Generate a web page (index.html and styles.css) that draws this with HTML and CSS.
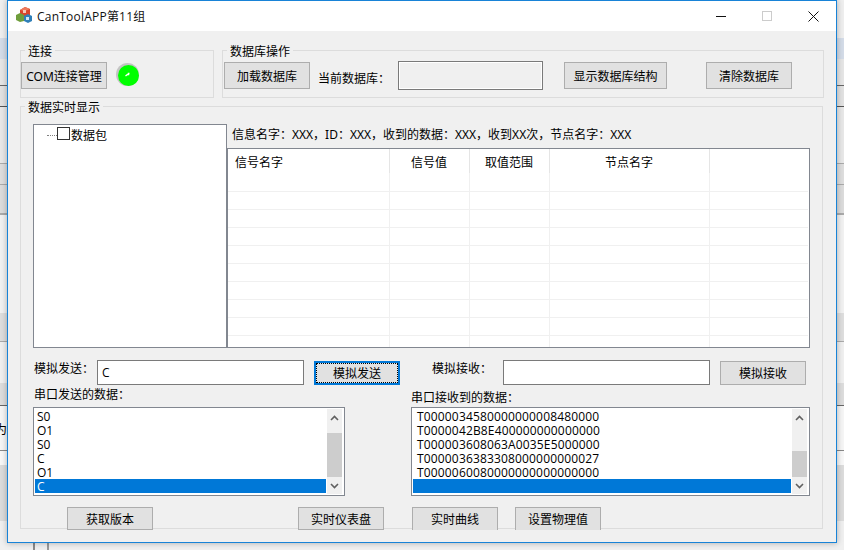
FILE: index.html
```html
<!DOCTYPE html>
<html lang="zh">
<head>
<meta charset="utf-8">
<title>CanToolAPP第11组</title>
<link rel="stylesheet" href="styles.css">
</head>
<body>
<div class="desktop">
  <span class="behind-glyph">为</span>
  <div class="window">
    <header class="titlebar">
      <svg class="app-icon" width="16" height="17" viewBox="0 0 16 17">
        <polygon points="4,4 9,1 14,3 14,9 9,11 4,9" fill="#d9452b"/>
        <polygon points="9,1 14,3 9,5 4,4" fill="#ee7a5c"/>
        <polygon points="0,9 4,7 8,9 8,15 4,16 0,14" fill="#6f9e3c"/>
        <polygon points="8,10 12,8 16,10 16,15 12,17 8,15" fill="#2f7fb8"/>
        <rect x="10" y="11" width="3" height="3" fill="#cfe6f5"/>
        <rect x="7" y="4" width="3" height="3" fill="#f5c9b8"/>
      </svg>
      <span class="title">CanToolAPP第11组</span>
      <div class="caption-buttons">
        <div class="caption"><svg width="10" height="10" viewBox="0 0 10 10"><path d="M0 5.5H10" stroke="#111" fill="none"/></svg></div>
        <div class="caption"><svg width="10" height="10" viewBox="0 0 10 10"><rect x="0.5" y="0.5" width="9" height="9" stroke="#ccc" fill="none"/></svg></div>
        <div class="caption"><svg width="11" height="11" viewBox="0 0 11 11"><path d="M0.5 0.5L10.5 10.5M10.5 0.5L0.5 10.5" stroke="#111" fill="none"/></svg></div>
      </div>
    </header>

    <main class="form">
      <div class="top-row">
        <section class="group group-conn">
          <span class="legend">连接</span>
          <div class="group-line">
            <button class="btn">COM连接管理</button>
            <svg class="led" width="24" height="24" viewBox="0 0 24 24">
              <circle cx="11.5" cy="11.5" r="11.5" fill="#c4c4c4"/>
              <circle cx="12.5" cy="12.5" r="10.5" fill="#00ff00"/>
              <path d="M9.5 13L11.5 11.5H12.5V10.5H13.5" stroke="#fff" stroke-width="1.4" fill="none"/>
            </svg>
          </div>
        </section>
        <section class="group group-db">
          <span class="legend">数据库操作</span>
          <div class="group-line">
            <button class="btn">加载数据库</button>
            <span class="label db-label">当前数据库：</span>
            <div class="field db-field"></div>
            <button class="btn btn-struct">显示数据库结构</button>
            <button class="btn btn-clear">清除数据库</button>
          </div>
        </section>
      </div>

      <section class="group group-live">
        <span class="legend">数据实时显示</span>
        <div class="live-top">
          <div class="tree">
            <span class="tree-dots"></span>
            <span class="tree-check"></span>
            <span class="tree-text">数据包</span>
          </div>
          <div class="live-right">
            <div class="info">信息名字：XXX，ID：XXX，收到的数据：XXX，收到XX次，节点名字：XXX</div>
            <div class="grid-box">
              <table class="grid">
                <thead>
                  <tr><th class="col-name">信号名字</th><th class="col-val">信号值</th><th class="col-range">取值范围</th><th class="col-node">节点名字</th><th></th></tr>
                </thead>
                <tbody>
                  <tr><td></td><td></td><td></td><td></td><td></td></tr>
                  <tr><td></td><td></td><td></td><td></td><td></td></tr>
                  <tr><td></td><td></td><td></td><td></td><td></td></tr>
                  <tr><td></td><td></td><td></td><td></td><td></td></tr>
                  <tr><td></td><td></td><td></td><td></td><td></td></tr>
                  <tr><td></td><td></td><td></td><td></td><td></td></tr>
                  <tr><td></td><td></td><td></td><td></td><td></td></tr>
                  <tr><td></td><td></td><td></td><td></td><td></td></tr>
                  <tr><td></td><td></td><td></td><td></td><td></td></tr>
                  <tr class="last"><td></td><td></td><td></td><td></td><td></td></tr>
                </tbody>
              </table>
            </div>
          </div>
        </div>

        <div class="sim-row">
          <span class="label sim-send-label">模拟发送：</span>
          <div class="field sim-field"><span class="field-text">C</span></div>
          <button class="btn btn-sim btn-focus"><span class="focus-ring">模拟发送</span></button>
          <span class="label sim-recv-label">模拟接收：</span>
          <div class="field sim-field"></div>
          <button class="btn btn-sim btn-recv">模拟接收</button>
        </div>

        <div class="caption-row">
          <span class="label cap-send">串口发送的数据：</span>
          <span class="label cap-recv">串口接收到的数据：</span>
        </div>

        <div class="lists">
          <div class="list list-send">
            <ul class="items">
              <li>S0</li><li>O1</li><li>S0</li><li>C</li><li>O1</li><li class="selected">C</li>
            </ul>
            <div class="scrollbar">
              <svg class="chev-up" width="9" height="6" viewBox="0 0 9 6"><path d="M1 5L4.5 1.5L8 5" stroke="#606060" stroke-width="1.6" fill="none"/></svg>
              <div class="thumb thumb-send"></div>
              <svg class="chev-down" width="9" height="6" viewBox="0 0 9 6"><path d="M1 1L4.5 4.5L8 1" stroke="#606060" stroke-width="1.6" fill="none"/></svg>
            </div>
          </div>
          <div class="list list-recv">
            <ul class="items items-recv">
              <li>T0000034580000000008480000</li>
              <li>T0000042B8E400000000000000</li>
              <li>T000003608063A0035E5000000</li>
              <li>T0000036383308000000000027</li>
              <li>T0000060080000000000000000</li>
              <li class="selected">&nbsp;</li>
            </ul>
            <div class="scrollbar">
              <svg class="chev-up" width="9" height="6" viewBox="0 0 9 6"><path d="M1 5L4.5 1.5L8 5" stroke="#606060" stroke-width="1.6" fill="none"/></svg>
              <div class="thumb thumb-recv"></div>
              <svg class="chev-down" width="9" height="6" viewBox="0 0 9 6"><path d="M1 1L4.5 4.5L8 1" stroke="#606060" stroke-width="1.6" fill="none"/></svg>
            </div>
          </div>
        </div>

        <div class="bottom-row">
          <button class="btn btn-low btn-version">获取版本</button>
          <button class="btn btn-low btn-dash">实时仪表盘</button>
          <button class="btn btn-low btn-cut btn-curve">实时曲线</button>
          <button class="btn btn-low btn-cut btn-phys">设置物理值</button>
        </div>
      </section>
    </main>
  </div>
</div>
</body>
</html>
```

FILE: styles.css
```css
* { box-sizing: border-box; }
html, body { margin: 0; padding: 0; }
body {
  width: 844px;
  height: 550px;
  overflow: hidden;
  font-family: "Noto Sans", "Noto Sans CJK SC", sans-serif;
  font-size: 12px;
  color: #000;
}
.desktop {
  position: relative;
  width: 844px;
  height: 550px;
  overflow: hidden;
  background:
    linear-gradient(to right, transparent 33px, #8a8a8a 33px, #8a8a8a 35px, transparent 35px, transparent 47px, #9a9a9a 47px, #9a9a9a 49px, transparent 49px) 0 543px / 100% 7px no-repeat,
    linear-gradient(to bottom,
      #efefef 0, #efefef 38px,
      #d4dce8 38px, #d4dce8 59px,
      #e6e6e6 59px, #e6e6e6 85px,
      #666 85px, #666 86px,
      #e2e2e2 86px, #e2e2e2 106px,
      #555 106px, #555 107px,
      #e8e8e8 107px, #e8e8e8 163px,
      #aaa 163px, #aaa 164px,
      #dedede 164px, #dedede 184px,
      #aaa 184px, #aaa 185px,
      #dcdcdc 185px, #dcdcdc 213px,
      #aaa 213px, #aaa 215px,
      #f2f2f2 215px, #f2f2f2 313px,
      #dedede 313px, #dedede 341px,
      #aaa 341px, #aaa 342px,
      #f0f0f0 342px, #f0f0f0 383px,
      #ddd 383px, #ddd 405px,
      #666 405px, #666 406px,
      #f6f6f6 406px, #f6f6f6 450px,
      #888 450px, #888 451px,
      #f8f8f8 451px, #f8f8f8 465px,
      #dcdcdc 465px, #dcdcdc 521px,
      #f0f0f0 521px, #f0f0f0 550px);
}
.behind-glyph {
  position: absolute;
  left: -5px;
  top: 421px;
  font-size: 12px;
  line-height: 18px;
}
.window {
  position: absolute;
  left: 7px;
  top: 0;
  width: 830px;
  height: 543px;
  border: 1px solid #1883d7;
  background: #f0f0f0;
  box-shadow: 0 0 6px rgba(0, 0, 0, 0.3);
  display: flex;
  flex-direction: column;
}
.titlebar {
  height: 30px;
  flex: none;
  background: #fff;
  display: flex;
  align-items: center;
  padding-left: 8px;
}
.app-icon { flex: none; margin-top: -3px; }
.title {
  margin-left: 5px;
  font-family: "Open Sans", "Noto Sans CJK SC", sans-serif;
  font-size: 12px;
  letter-spacing: 0.22px;
  color: #111;
  white-space: nowrap;
}
.caption-buttons { display: flex; margin-left: auto; height: 30px; }
.caption {
  width: 46px;
  display: flex;
  align-items: center;
  justify-content: center;
}
.form {
  flex: 1;
  padding: 19px 0 0 12px;
  display: flex;
  flex-direction: column;
  gap: 8px;
}
.top-row { display: flex; gap: 8px; }
.group {
  position: relative;
  border: 1px solid #dcdcdc;
}
.legend {
  position: absolute;
  left: 4px;
  top: -7px;
  padding: 0 3px;
  background: #f0f0f0;
  line-height: 16px;
  white-space: nowrap;
}
.group-conn { width: 194px; height: 48px; }
.group-db { width: 602px; height: 48px; }
.group-live { width: 803px; height: 423px; padding: 17px 0 0 12px; }
.group-line { display: flex; align-items: flex-start; padding-top: 10px; }
.group-conn .group-line { padding-top: 11px; }
.group-db .group-line { padding: 10px 0 0 1px; }
.btn {
  width: 86px;
  height: 27px;
  margin: 1px 0 0;
  padding: 0;
  flex: none;
  font: inherit;
  color: #000;
  background: #e1e1e1;
  border: 1px solid #adadad;
  border-radius: 0;
  white-space: nowrap;
}
.group-conn .btn { margin-top: 0; }
.led { flex: none; margin: 1px 0 0 9px; }
.label { white-space: nowrap; line-height: 16px; }
.db-label { width: 80px; margin: 10px 0 0 8px; flex: none; }
.field {
  background: #fff;
  border: 1px solid #7a7a7a;
  flex: none;
}
.db-field {
  width: 145px;
  height: 29px;
  background: #f0f0f0;
  box-shadow: inset 0 0 0 1px #fff;
}
.btn-struct { width: 103px; margin-left: 21px; }
.btn-clear { margin-left: 39px; }
.live-top { display: flex; }
.tree {
  width: 194px;
  height: 224px;
  flex: none;
  background: #fff;
  border: 1px solid #828790;
  display: flex;
  align-items: flex-start;
  padding: 2px 0 0 13px;
}
.tree-dots {
  width: 10px;
  margin-top: 8px;
  border-top: 1px dotted #808080;
  flex: none;
}
.tree-check {
  width: 13px;
  height: 13px;
  flex: none;
  border: 1px solid #333;
  background: #fff;
}
.tree-text { margin-left: 1px; line-height: 16px; margin-top: 1px; }
.live-right { width: 583px; flex: none; }
.info { height: 24px; line-height: 22px; padding-left: 5px; white-space: nowrap; }
.grid-box {
  width: 583px;
  height: 200px;
  background: #fff;
  border: 1px solid #828790;
  overflow: hidden;
}
.grid {
  width: 580px;
  table-layout: fixed;
  border-collapse: collapse;
  border-spacing: 0;
}
.grid th {
  height: 24px;
  padding: 2px 0 0;
  font-weight: 400;
  text-align: center;
  border-right: 1px solid #e5e5e5;
}
.grid th:last-child { border-right: 0; }
.col-name { width: 161px; text-align: left !important; padding-left: 7px !important; }
.col-val { width: 80px; }
.col-range { width: 80px; }
.col-node { width: 160px; }
.grid td {
  height: 18px;
  padding: 0;
  border-right: 1px solid #f0f0f0;
  border-bottom: 1px solid #f0f0f0;
}
.grid td:last-child { border-right: 0; }
.grid tr.last td { border-bottom: 0; }
.sim-row {
  display: flex;
  align-items: flex-start;
  height: 25px;
  margin-top: 12px;
}
.sim-send-label { width: 63px; margin: 1px 0 0 1px; flex: none; }
.sim-field {
  width: 207px;
  height: 25px;
  padding-left: 4px;
  display: flex;
  align-items: center;
}
.field-text { font-family: "Open Sans", sans-serif; }
.btn-sim { height: 24px; margin-left: 10px; }
.btn-focus {
  border: 2px solid #0078d7;
  padding: 0;
  display: flex;
  align-items: stretch;
}
.focus-ring {
  flex: 1;
  display: flex;
  align-items: center;
  justify-content: center;
  border: 1px dotted #000;
}
.sim-recv-label { width: 71px; margin: 1px 0 0 32px; flex: none; }
.caption-row { display: flex; height: 22px; }
.cap-send { margin: 2px 0 0 1px; width: 377px; flex: none; }
.cap-recv { margin-top: 5px; }
.lists { display: flex; gap: 66px; }
.list {
  height: 89px;
  flex: none;
  background: #fff;
  border: 1px solid #828790;
  display: flex;
  padding: 1px 2px 1px 1px;
  gap: 1px;
}
.list-send { width: 312px; }
.list-recv { width: 399px; }
.items {
  list-style: none;
  margin: 0;
  padding: 0;
  flex: 1;
  min-width: 0;
  font-family: "Open Sans", sans-serif;
  font-size: 12px;
}
.items li {
  height: 14px;
  line-height: 16px;
  padding-left: 2px;
  white-space: nowrap;
}
.items-recv { letter-spacing: 0.16px; }
.items-recv li { padding-left: 4px; }
.items li.selected { background: #0078d7; color: #fff; overflow: hidden; }
.scrollbar {
  position: relative;
  width: 15px;
  height: 85px;
  flex: none;
  background: #f0f0f0;
}
.chev-up { position: absolute; left: 3px; top: 6px; }
.chev-down { position: absolute; left: 3px; top: 74px; }
.thumb { position: absolute; left: 0; width: 15px; background: #cdcdcd; }
.thumb-send { top: 24px; height: 44px; }
.thumb-recv { top: 42px; height: 26px; }
.bottom-row { display: flex; margin-top: 11px; padding-left: 34px; }
.btn-low { height: 23px; margin-top: 0; }
.btn-dash { margin-left: 145px; }
.btn-curve { margin-left: 28px; }
.btn-phys { margin-left: 17px; }
.btn-cut { border-bottom: 0; }
```
